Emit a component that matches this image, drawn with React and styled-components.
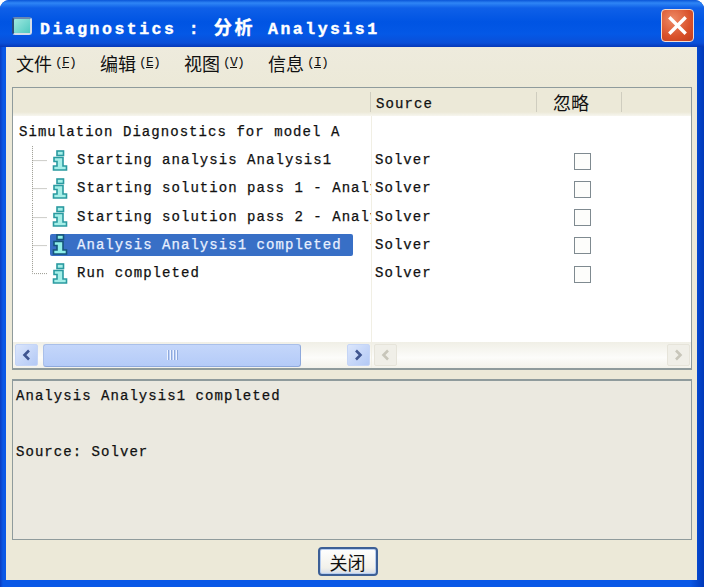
import React from 'react';
import styled, { createGlobalStyle } from 'styled-components';

const MONO = '"Liberation Mono", "Noto Sans CJK SC", monospace';
const CJK = '"Noto Sans CJK SC", "Liberation Sans", sans-serif';

const Global = createGlobalStyle`
  html, body { margin: 0; padding: 0; background: #fff; }
  * { box-sizing: border-box; }
`;

const Window = styled.div`
  width: 704px;
  height: 587px;
  display: flex;
  flex-direction: column;
  border-radius: 9px 9px 0 0;
  overflow: hidden;
  background: linear-gradient(90deg, #0a3cc0 0, #0a58e6 3px, #0a58e6 690px, #0038b8 704px);
  font-family: ${MONO};
  color: #111;
  -webkit-text-stroke: 0.25px currentColor;
`;

const TitleBar = styled.div`
  height: 47px;
  flex: none;
  display: flex;
  align-items: center;
  padding: 4px 10px 0 12px;
  background: linear-gradient(180deg, #0a55d8 0, #2f86f5 3px, #0f60e8 8px, #0054e3 22px, #0458e6 34px, #0a4fd8 43px, #0638b8 47px);
`;

const TitleIcon = styled.span`
  width: 20px;
  height: 18px;
  margin-right: 8px;
  border-radius: 3px;
  background: linear-gradient(135deg, #9fe8e0, #4fc9c0);
  border: 2px solid #d5dde8;
  border-left-color: #2a4a7a;
  border-top-color: #6a88b0;
`;

const TitleText = styled.span`
  flex: 1;
  color: #fff;
  font-size: 16.5px;
  font-weight: 700;
  letter-spacing: 2.5px;
  white-space: pre;
  -webkit-text-stroke: 0.4px #fff;
`;

const TitleCjk = styled.span`
  font-family: ${CJK};
  font-size: 18px;
  letter-spacing: 3px;
`;

const CloseButton = styled.button`
  width: 33px;
  height: 33px;
  padding: 0;
  display: flex;
  align-items: center;
  justify-content: center;
  border: 1.5px solid #f2dcd2;
  border-radius: 4px;
  background: radial-gradient(circle at 35% 30%, #ee8a66, #d9512a 60%, #c03c1c);
`;

const Body = styled.div`
  flex: 1;
  min-height: 0;
  margin: 0 7px 7px 6px;
  display: flex;
  flex-direction: column;
  background: #ece9d8;
`;

const MenuBar = styled.div`
  height: 40px;
  flex: none;
  display: flex;
  align-items: center;
  gap: 22px;
  padding: 0 0 9px 10px;
  background: linear-gradient(180deg, #eeebdd, #ece9d8);
`;

const MenuItem = styled.span`
  font-family: ${CJK};
  font-size: 18px;
  width: 62px;
  white-space: nowrap;
  display: flex;
  align-items: center;
  -webkit-text-stroke: 0;
`;

const MenuKey = styled.span`
  font-family: ${MONO};
  font-size: 13px;
  letter-spacing: -0.8px;
  margin-left: 3px;
  u { text-underline-offset: 1px; }
`;

const TreePanel = styled.div`
  height: 283px;
  flex: none;
  margin: 0 5px 0 6px;
  border: 1px solid #8f9b9c;
  border-bottom-width: 2px;
  background: #fff;
  display: flex;
  flex-direction: column;
`;

const Header = styled.div`
  height: 28px;
  flex: none;
  display: grid;
  grid-template-columns: 358px 166px 85px 1fr;
  background: linear-gradient(180deg, #ece9d8 0, #ece9d8 24px, #f7f6ef 28px);
`;

const HeaderCell = styled.div`
  display: flex;
  align-items: center;
  padding-left: ${p => p.$pad || 5}px;
  padding-top: ${p => p.$cjk ? 0 : 3}px;
  font-size: ${p => p.$cjk ? 18 : 14}px;
  font-family: ${p => p.$cjk ? CJK : MONO};
  letter-spacing: ${p => p.$cjk ? 0 : 1.1}px;
  -webkit-text-stroke: ${p => p.$cjk ? 0 : '0.25px'};
  position: relative;
  &::before {
    content: '';
    display: ${p => p.$first ? 'none' : 'block'};
    position: absolute;
    left: -1px;
    top: 4px;
    bottom: 4px;
    width: 1px;
    background: #cfcdbf;
  }
`;

const Panes = styled.div`
  flex: 1;
  min-height: 0;
  display: flex;
`;

const NamePane = styled.div`
  width: 359px;
  flex: none;
  display: flex;
  flex-direction: column;
  border-right: 1px solid #f1efe4;
`;

const InfoPane = styled.div`
  flex: 1;
  min-width: 0;
  display: flex;
  flex-direction: column;
`;

const Rows = styled.div`
  flex: 1;
  padding-top: 2px;
`;

const Row = styled.div`
  height: 28.2px;
  display: flex;
  align-items: center;
  font-size: 14px;
  letter-spacing: 1.05px;
  white-space: pre;
  overflow: hidden;
`;

const RootRow = styled(Row)`
  padding-left: 6px;
`;

const Connector = styled.svg`
  flex: none;
  width: 18px;
  height: 28.2px;
  margin-left: 19px;
`;

const Item = styled.div`
  display: flex;
  align-items: center;
  height: 22px;
  width: ${p => p.$selected ? '303px' : 'auto'};
  padding-left: 1px;
  border-radius: 2px;
  overflow: hidden;
  color: ${p => p.$selected ? '#e8f0ff' : '#111'};
  background: ${p => p.$selected ? '#386fc6' : 'transparent'};
`;

const ItemLabel = styled.span`
  margin-left: 8px;
`;

const InfoRow = styled(Row)`
  display: grid;
  grid-template-columns: 164px 1fr;
  padding-left: 3px;
`;

const CheckCell = styled.div`
  padding: 2px 0 0 35px;
  display: flex;
`;

const CheckBox = styled.span`
  width: 17px;
  height: 17px;
  border: 1px solid #7f8a90;
  background: #fdfdfb;
`;

const ScrollTrack = styled.div`
  height: 26px;
  flex: none;
  display: flex;
  align-items: center;
  justify-content: space-between;
  padding: 0 1px 0 2px;
  background: linear-gradient(180deg, #f0efe6, #fcfcfa 60%, #f3f2ea);
`;

const ScrollBtn = styled.div`
  width: 23px;
  height: 22px;
  border-radius: 2px;
  display: flex;
  align-items: center;
  justify-content: center;
  background: ${p => p.$off ? '#f0efe8' : 'linear-gradient(135deg, #dbe6fc, #b3c9f5)'};
  border: 1px solid ${p => p.$off ? '#e6e4da' : '#c5d5f6'};
`;

const Thumb = styled.div`
  width: 258px;
  height: 23px;
  margin: 0 auto 0 5px;
  display: flex;
  align-items: center;
  justify-content: center;
  gap: 1px;
  border-radius: 3px;
  border: 1px solid #a9bfe9;
  border-right-color: #8ea9dc;
  border-bottom-color: #8ea9dc;
  background: linear-gradient(180deg, #c4d6fa, #b4cbf8);
`;

const Grip = styled.i`
  width: 1px;
  height: 10px;
  margin-right: 1px;
  background: #eef3fe;
  box-shadow: 1px 0 0 #8ea9dc;
`;

const DetailPanel = styled.div`
  height: 161px;
  flex: none;
  margin: 9px 5px 0 6px;
  padding: 1px 3px;
  border: 1px solid #8f9b9c;
  border-top-width: 2px;
  background: #ebe9e0;
  font-size: 14px;
  letter-spacing: 1.05px;
  line-height: 28px;
  white-space: pre;
`;

const Footer = styled.div`
  flex: 1;
  display: flex;
  justify-content: center;
  padding: 7px 8px 0 0;
`;

const CloseAction = styled.button`
  width: 60px;
  height: 29px;
  padding: 0;
  font-family: ${CJK};
  font-size: 18px;
  line-height: 1;
  color: #111;
  -webkit-text-stroke: 0;
  border: 2px solid #3c5f96;
  border-radius: 4px;
  background: linear-gradient(180deg, #fff, #f2f1ea 75%, #d5dce8);
  box-shadow: inset 0 0 0 1px #b6cdf0;
`;

const InfoIcon = ({ dark }) => (
  <svg width="18" height="21" viewBox="0 0 18 21" style={{ flex: 'none' }}>
    <g fill={dark ? '#8ff0e8' : '#a6efe8'} stroke={dark ? '#14567a' : '#2a9aa0'} strokeWidth="1.6">
      <rect x="6" y="1" width="6.5" height="4.5" />
      <path d="M3 7.5h9v8.5h3.5v4H2.5v-4H6v-4.5H3z" />
    </g>
  </svg>
);

const TreeLine = ({ last }) => (
  <Connector viewBox="0 0 18 28">
    <path
      d={last ? 'M.5 0V14.5H15' : 'M.5 0V28M.5 14.5H15'}
      fill="none"
      stroke="#9a9a90"
      strokeDasharray="1 1"
    />
  </Connector>
);

const Chevron = ({ dir, off }) => (
  <svg width="11" height="12" viewBox="0 0 11 12">
    <path
      d={dir === 'left' ? 'M8 1.5 3.5 6 8 10.5' : 'M3 1.5 7.5 6 3 10.5'}
      fill="none"
      stroke={off ? '#c8c6ba' : '#3f5590'}
      strokeWidth="2.6"
    />
  </svg>
);

const X = () => (
  <svg width="21" height="21" viewBox="0 0 21 21">
    <path d="M3.5 3.5 17.5 17.5M17.5 3.5 3.5 17.5" stroke="#fff" strokeWidth="3.4" strokeLinecap="square" />
  </svg>
);

const messages = [
  'Starting analysis Analysis1',
  'Starting solution pass 1 - Analysis1',
  'Starting solution pass 2 - Analysis1',
  'Analysis Analysis1 completed',
  'Run completed',
];
const SELECTED = 3;

const menus = [['文件', 'F'], ['编辑', 'E'], ['视图', 'V'], ['信息', 'I']];

export default function App() {
  return (
    <>
      <Global />
      <Window>
        <TitleBar>
          <TitleIcon />
          <TitleText>Diagnostics : <TitleCjk>分析</TitleCjk> Analysis1</TitleText>
          <CloseButton aria-label="close"><X /></CloseButton>
        </TitleBar>
        <Body>
          <MenuBar>
            {menus.map(([label, key]) => (
              <MenuItem key={key}>
                {label}
                <MenuKey>(<u>{key}</u>)</MenuKey>
              </MenuItem>
            ))}
          </MenuBar>
          <TreePanel>
            <Header>
              <HeaderCell $first />
              <HeaderCell>Source</HeaderCell>
              <HeaderCell $cjk $pad={16}>忽略</HeaderCell>
              <HeaderCell />
            </Header>
            <Panes>
              <NamePane>
                <Rows>
                  <RootRow>Simulation Diagnostics for model A</RootRow>
                  {messages.map((m, i) => (
                    <Row key={m}>
                      <TreeLine last={i === messages.length - 1} />
                      <Item $selected={i === SELECTED}>
                        <InfoIcon dark={i === SELECTED} />
                        <ItemLabel>{m}</ItemLabel>
                      </Item>
                    </Row>
                  ))}
                </Rows>
                <ScrollTrack>
                  <ScrollBtn><Chevron dir="left" /></ScrollBtn>
                  <Thumb>
                    <Grip /><Grip /><Grip /><Grip />
                  </Thumb>
                  <ScrollBtn><Chevron dir="right" /></ScrollBtn>
                </ScrollTrack>
              </NamePane>
              <InfoPane>
                <Rows>
                  <InfoRow />
                  {messages.map(m => (
                    <InfoRow key={m}>
                      <span>Solver</span>
                      <CheckCell><CheckBox /></CheckCell>
                    </InfoRow>
                  ))}
                </Rows>
                <ScrollTrack>
                  <ScrollBtn $off><Chevron dir="left" off /></ScrollBtn>
                  <ScrollBtn $off><Chevron dir="right" off /></ScrollBtn>
                </ScrollTrack>
              </InfoPane>
            </Panes>
          </TreePanel>
          <DetailPanel>{'Analysis Analysis1 completed\n\nSource: Solver'}</DetailPanel>
          <Footer>
            <CloseAction>关闭</CloseAction>
          </Footer>
        </Body>
      </Window>
    </>
  );
}
